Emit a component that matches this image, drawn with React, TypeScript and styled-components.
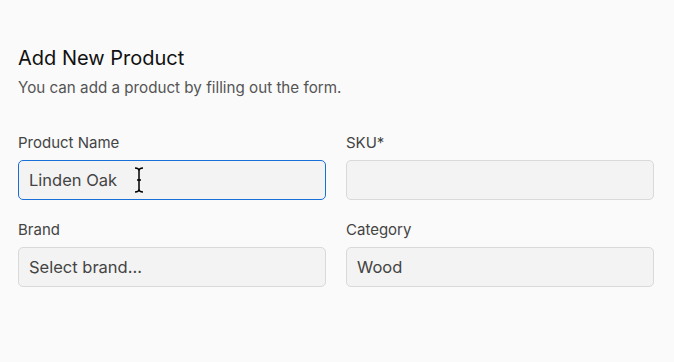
import styled, { createGlobalStyle } from 'styled-components'

const GlobalStyle = createGlobalStyle`
  html, body {
    margin: 0;
    padding: 0;
    background: #fafafa;
    font-family: Inter, "Noto Sans", sans-serif;
  }
`

const Page = styled.div`
  width: 674px;
  height: 362px;
  box-sizing: border-box;
  padding: 46px 20px 0 18px;
  background: #fafafa;
`

const Title = styled.h1`
  margin: 0;
  font-size: 20px;
  font-weight: 400;
  color: #111;
  line-height: 24px;
`

const Subtitle = styled.p`
  margin: 8px 0 0;
  font-size: 15.2px;
  color: #555;
  line-height: 20px;
`

const Grid = styled.div`
  margin-top: 35px;
  display: grid;
  grid-template-columns: 308px 308px;
  column-gap: 20px;
  row-gap: 20px;
`

const Field = styled.div`
  display: flex;
  flex-direction: column;
  gap: 8px;
`

const Label = styled.label`
  font-size: 15px;
  color: #444;
  line-height: 19px;
`

const InputBox = styled.div<{ $focused?: boolean }>`
  position: relative;
  height: 40px;
  box-sizing: border-box;
  border: 1px solid ${(p) => (p.$focused ? '#1a6fd6' : '#d9d9d9')};
  border-radius: 5px;
  background: #f3f3f3;
  display: flex;
  align-items: center;
  padding: 0 10px;
  font-size: 16.5px;
  color: #444;
`

const Cursor = styled.svg`
  position: absolute;
  left: 114px;
  top: 5px;
`

export default function App() {
  return (
    <>
      <GlobalStyle />
      <Page>
        <Title>Add New Product</Title>
        <Subtitle>You can add a product by filling out the form.</Subtitle>
        <Grid>
          <Field>
            <Label>Product Name</Label>
            <InputBox $focused>
              Linden Oak
              <Cursor width="12" height="28" viewBox="0 0 12 28">
                <path
                  d="M2 2 C4.5 2 6 3 6 5 L6 23 C6 25 4.5 26 2 26 M10 2 C7.5 2 6 3 6 5 M6 23 C6 25 7.5 26 10 26 M4 14 L8 14"
                  fill="none"
                  stroke="#000"
                  strokeWidth="1.5"
                />
              </Cursor>
            </InputBox>
          </Field>
          <Field>
            <Label>SKU*</Label>
            <InputBox />
          </Field>
          <Field>
            <Label>Brand</Label>
            <InputBox>Select brand...</InputBox>
          </Field>
          <Field>
            <Label>Category</Label>
            <InputBox>Wood</InputBox>
          </Field>
        </Grid>
      </Page>
    </>
  )
}
